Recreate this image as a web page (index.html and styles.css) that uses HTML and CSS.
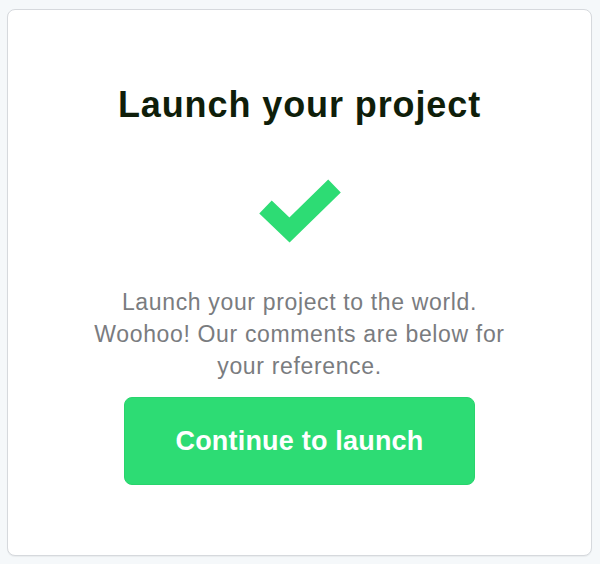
FILE: index.html
```html
<!DOCTYPE html>
<html>
<head>
<meta charset="utf-8">
<link rel="stylesheet" href="styles.css">
</head>
<body>
<div class="card">
  <h1 class="title">Launch your project</h1>
  <svg class="check" width="90" height="72" viewBox="0 0 90 72">
    <polyline points="10.5,31 34.5,54 79.5,10" fill="none" stroke="#2ddc74" stroke-width="18" stroke-linejoin="miter" stroke-linecap="butt"/>
  </svg>
  <p class="desc">Launch your project to the world.<br>Woohoo! Our comments are below for<br>your reference.</p>
  <button class="btn">Continue to launch</button>
</div>
</body>
</html>
```
FILE: styles.css
```css
html, body {
  margin: 0;
  height: 100%;
}
body {
  background: #f5f8fa;
  padding: 9px 8px 8px 7px;
  box-sizing: border-box;
  font-family: "Liberation Sans", Arial, sans-serif;
}
.card {
  box-sizing: border-box;
  height: 100%;
  background: #fff;
  border: 1px solid #d6d9dd;
  border-radius: 8px;
  box-shadow: 0 1px 1px rgba(0,0,0,0.05);
  display: flex;
  flex-direction: column;
  align-items: center;
  padding-top: 73px;
}
.title {
  margin: 0;
  font-size: 36px;
  line-height: 44px;
  font-weight: bold;
  letter-spacing: 0.9px;
  color: #0f1e0a;
}
.check {
  display: block;
  margin-top: 49px;
}
.desc {
  margin: 38px 0 0;
  font-size: 23px;
  line-height: 32px;
  letter-spacing: 0.65px;
  color: #7a7c7f;
  text-align: center;
}
.btn {
  margin-top: 15px;
  width: 351px;
  height: 88px;
  border: 1px solid #29d46d;
  border-radius: 8px;
  background: #2ddc74;
  color: #fff;
  font-family: "Liberation Sans", Arial, sans-serif;
  font-size: 27px;
  font-weight: bold;
  letter-spacing: 0.2px;
  padding: 0;
}
```
